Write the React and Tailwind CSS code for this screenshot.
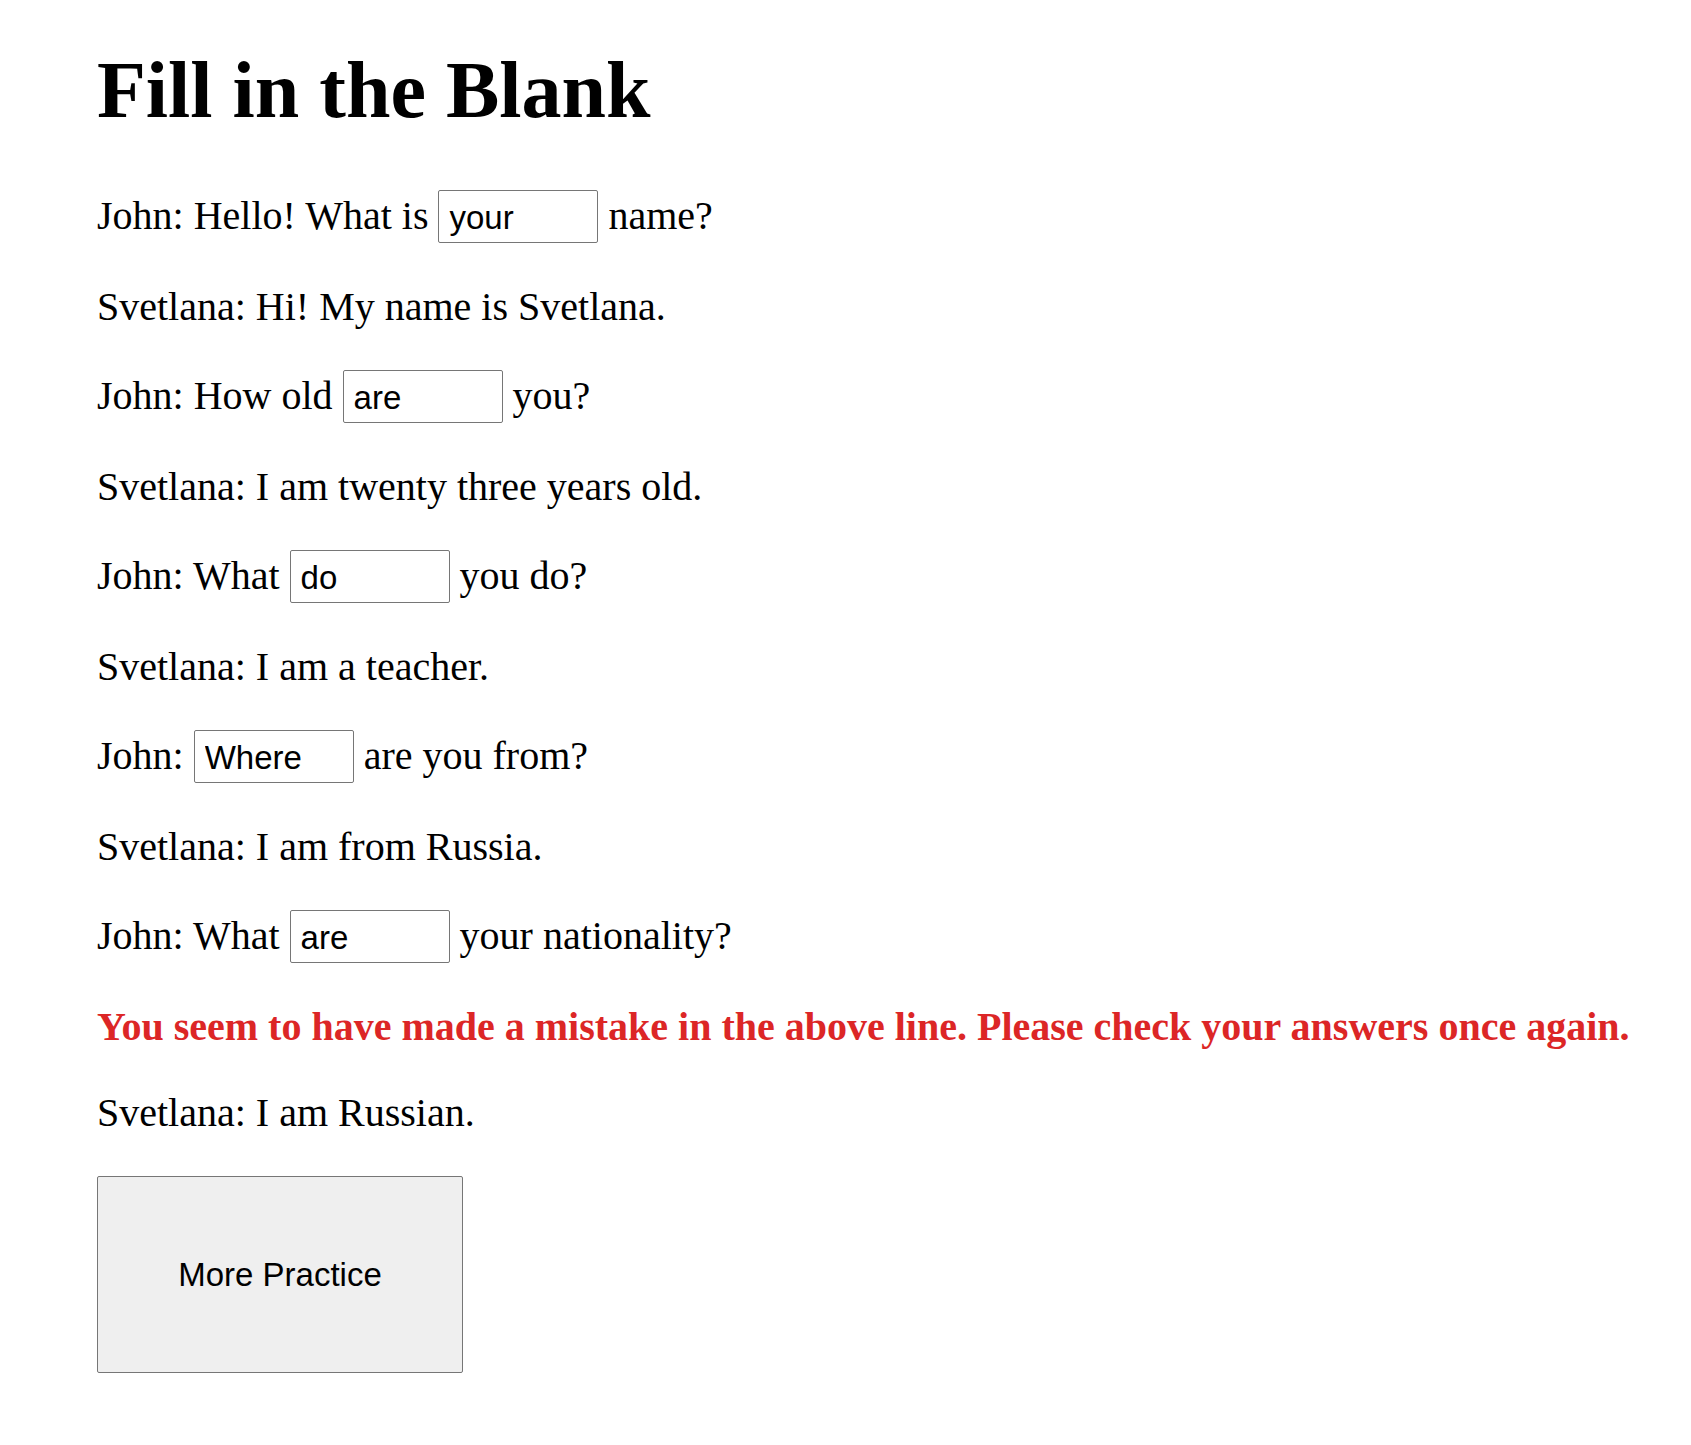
import React, { useState } from "react";

const lines = [
  { speaker: "John", before: "Hello! What is", answer: "your", after: "name?" },
  { speaker: "Svetlana", text: "Hi! My name is Svetlana." },
  { speaker: "John", before: "How old", answer: "are", after: "you?" },
  { speaker: "Svetlana", text: "I am twenty three years old." },
  { speaker: "John", before: "What", answer: "do", after: "you do?" },
  { speaker: "Svetlana", text: "I am a teacher." },
  { speaker: "John", before: "", answer: "Where", after: "are you from?" },
  { speaker: "Svetlana", text: "I am from Russia." },
  { speaker: "John", before: "What", answer: "are", after: "your nationality?", wrong: true },
  { speaker: "Svetlana", text: "I am Russian." },
];

function BlankInput({ value, onChange }) {
  return (
    <input
      type="text"
      value={value}
      onChange={(e) => onChange(e.target.value)}
      className="w-[160px] h-[53px] mt-0 mb-[1px] align-baseline border border-[#767676] rounded-[2px] bg-white pt-[2px] pl-[10px] pr-[4px] text-[33px] text-black outline-none"
      style={{ fontFamily: '"Liberation Sans", Arial, sans-serif' }}
    />
  );
}

export default function App() {
  const [answers, setAnswers] = useState(
    lines.map((l) => (l.answer !== undefined ? l.answer : ""))
  );

  const setAnswer = (i, v) => {
    const next = [...answers];
    next[i] = v;
    setAnswers(next);
  };

  return (
    <div
      className="min-h-screen bg-white pt-[44px] pl-[97px] text-black"
      style={{ fontFamily: '"Liberation Serif", "Times New Roman", serif' }}
    >
      <h1 className="m-0 mb-[54px] text-[80px] leading-[92px] font-bold">
        Fill in the Blank
      </h1>

      {lines.map((line, i) => (
        <React.Fragment key={i}>
          {line.answer !== undefined ? (
            <p className="m-0 mb-[40px] text-[40px] leading-[46px] whitespace-nowrap">
              {line.speaker}: {line.before ? line.before + " " : ""}
              <BlankInput value={answers[i]} onChange={(v) => setAnswer(i, v)} />{" "}
              {line.after}
            </p>
          ) : (
            <p className="m-0 mb-[40px] text-[40px] leading-[46px]">
              {line.speaker}: {line.text}
            </p>
          )}
          {line.wrong && (
            <p className="m-0 mb-[40px] text-[40px] leading-[46px] font-bold text-[#dc2626] whitespace-nowrap">
              You seem to have made a mistake in the above line. Please check your answers once again.
            </p>
          )}
        </React.Fragment>
      ))}

      <button
        type="button"
        className="w-[366px] h-[197px] bg-[#efefef] border border-[#767676] rounded-[2px] text-[33px] text-black"
        style={{ fontFamily: '"Liberation Sans", Arial, sans-serif' }}
      >
        More Practice
      </button>
    </div>
  );
}
